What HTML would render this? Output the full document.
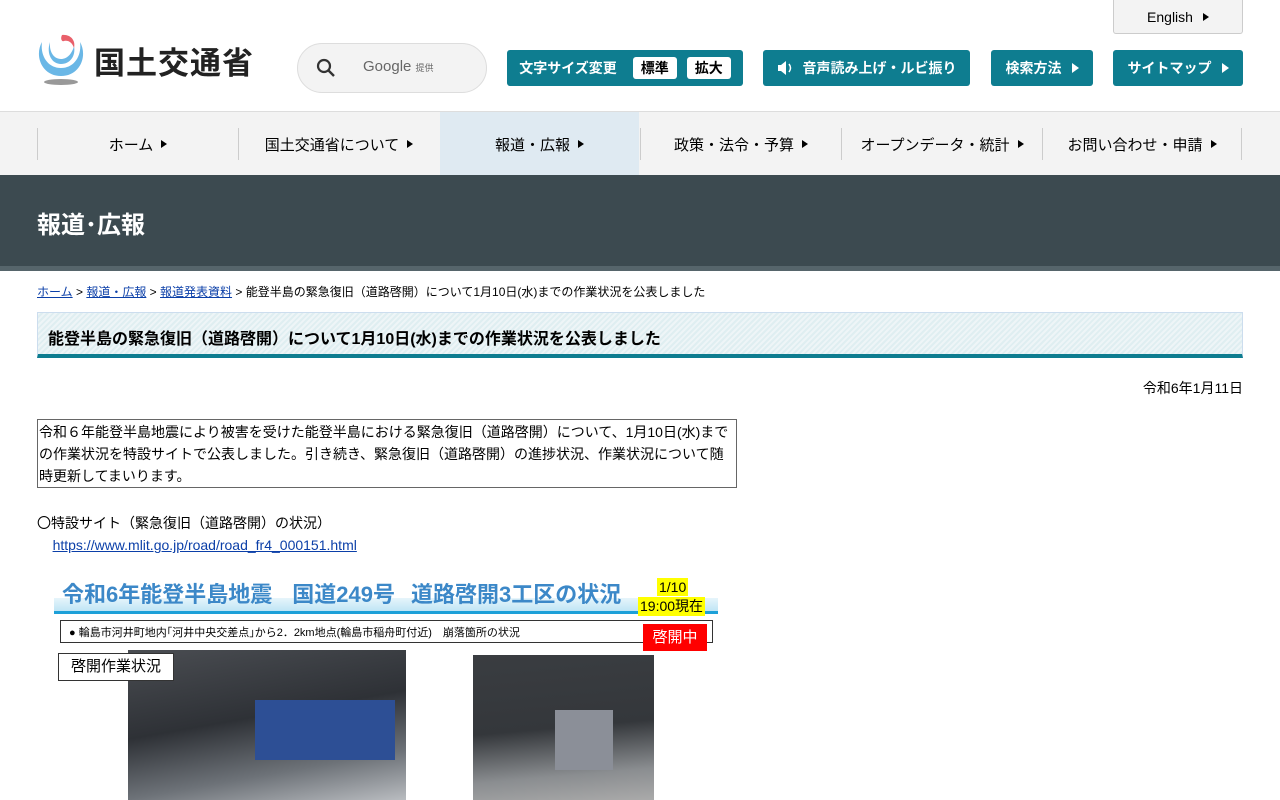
<!DOCTYPE html>
<html><head><meta charset="utf-8"><style>
*{margin:0;padding:0;box-sizing:border-box}
body{width:1280px;height:800px;overflow:hidden;background:#fff;font-family:"Liberation Sans","Noto Sans CJK JP",sans-serif;color:#000;position:relative}
.abs{position:absolute}
.btn{position:absolute;top:50px;height:36px;background:#0e7d90;color:#fff;border-radius:3px;font-size:14px;font-weight:bold;display:flex;align-items:center;justify-content:center}
.tri{display:inline-block;width:0;height:0;border-left:7px solid currentColor;border-top:5px solid transparent;border-bottom:5px solid transparent;margin-left:10px}
.nav{position:absolute;top:111px;left:0;width:1280px;height:64px;background:#f3f3f3;border-top:1px solid #ddd}
.ni{position:absolute;top:16px;height:32px;border-left:1px solid #ccc;font-size:15px;display:flex;align-items:center;justify-content:center}
.ni .tri{border-left-width:6px;border-top-width:4px;border-bottom-width:4px;margin-left:8px}
a{color:#0b3fa8}
</style></head><body>
<!-- logo -->
<svg class="abs" style="left:36px;top:32px" width="52" height="54" viewBox="0 0 52 54">
<path d="M6 10 C-2 24 6 44 25 44 C44 44 52 24 44 10 C46 24 38 36 25 36 C12 36 4 24 6 10 Z" fill="#6ab7e6"/>
<path d="M14 10 C10 22 16 32 25 32 C34 32 40 24 38 14 C36 22 31 27 25 27 C18 27 13 20 14 10 Z" fill="#6ab7e6"/>
<path d="M26 3 C34 2 40 8 38 16 C36 10 32 8 28 9 C26 10 24 7 26 3 Z" fill="#e9606a"/>
<ellipse cx="25" cy="50" rx="17" ry="3" fill="#999"/>
</svg>
<div class="abs" style="left:94px;top:38px;font-size:31px;font-weight:bold;color:#222;letter-spacing:1px">国土交通省</div>
<div class="abs" style="left:297px;top:43px;width:190px;height:50px;border:1px solid #ddd;border-radius:25px;background:#f3f3f3">
<svg class="abs" style="left:18px;top:14px" width="20" height="20" viewBox="0 0 20 20"><circle cx="8" cy="8" r="6" stroke="#333" stroke-width="2.2" fill="none"/><path d="M12.5 12.5 L18 18" stroke="#333" stroke-width="2.4"/></svg>
<span class="abs" style="left:65px;top:14px;font-size:15px;color:#666">Google <span style="font-size:9px">提供</span></span></div>
<div class="abs" style="left:1113px;top:0;width:130px;height:34px;background:#f3f3f3;border:1px solid #ccc;border-top:none;border-radius:0 0 3px 3px;font-size:14px;display:flex;align-items:center;justify-content:center">English<span class="tri" style="border-left-width:6px;border-top-width:4px;border-bottom-width:4px"></span></div>
<div class="btn" style="left:507px;width:236px">文字サイズ変更<span style="background:#fff;color:#000;padding:1px 8px;border-radius:3px;margin-left:16px">標準</span><span style="background:#fff;color:#000;padding:1px 8px;border-radius:3px;margin-left:10px">拡大</span></div>
<div class="btn" style="left:763px;width:207px"><svg width="18" height="16" viewBox="0 0 18 16" style="margin-right:8px"><path d="M1 5 H4 L9 1 V15 L4 11 H1 Z" fill="#fff"/><path d="M12 4 Q15 8 12 12" stroke="#fff" stroke-width="1.5" fill="none"/></svg>音声読み上げ・ルビ振り</div>
<div class="btn" style="left:991px;width:102px">検索方法<span class="tri"></span></div>
<div class="btn" style="left:1113px;width:130px">サイトマップ<span class="tri"></span></div>
<div class="nav">
<div class="ni" style="left:37px;width:201px">ホーム<span class="tri"></span></div>
<div class="ni" style="left:238px;width:201px">国土交通省について<span class="tri"></span></div>
<div class="abs" style="left:440px;top:0;width:199px;height:63px;background:#dfeaf2"></div>
<div class="ni" style="left:439px;width:201px;border-left:none">報道・広報<span class="tri"></span></div>
<div class="ni" style="left:640px;width:201px">政策・法令・予算<span class="tri"></span></div>
<div class="ni" style="left:841px;width:201px">オープンデータ・統計<span class="tri"></span></div>
<div class="ni" style="left:1042px;width:200px;border-right:1px solid #ccc">お問い合わせ・申請<span class="tri"></span></div>
</div>
<div class="abs" style="left:0;top:175px;width:1280px;height:96px;background:#3c4a50;border-bottom:5px solid #56656b"></div>
<div class="abs" style="left:37px;top:205px;font-size:24px;color:#fff;font-weight:bold">報道･広報</div>
<div class="abs" style="left:37px;top:283px;font-size:12px"><a href="#">ホーム</a> &gt; <a href="#">報道・広報</a> &gt; <a href="#">報道発表資料</a> &gt; 能登半島の緊急復旧（道路啓開）について1月10日(水)までの作業状況を公表しました</div>
<div class="abs" style="left:37px;top:312px;width:1206px;height:46px;border:1px solid #cde;border-bottom:4px solid #0e7d90;background:repeating-linear-gradient(135deg,#eef5f7 0 2px,#dfeef1 2px 4px);font-size:16px;font-weight:bold;padding:12px 10px">能登半島の緊急復旧（道路啓開）について1月10日(水)までの作業状況を公表しました</div>
<div class="abs" style="right:37px;top:378px;font-size:14px">令和6年1月11日</div>
<div class="abs" style="left:37px;top:419px;width:700px;height:69px;border:1px solid #666;font-size:14px;line-height:22px;padding:1px 1px">令和６年能登半島地震により被害を受けた能登半島における緊急復旧（道路啓開）について、1月10日(水)までの作業状況を特設サイトで公表しました。引き続き、緊急復旧（道路啓開）の進捗状況、作業状況について随時更新してまいります。</div>
<div class="abs" style="left:37px;top:512px;font-size:14px;line-height:22px">〇特設サイト（緊急復旧（道路啓開）の状況）<br>&nbsp;&nbsp;&nbsp;&nbsp;<a href="#">https://www.mlit.go.jp/road/road_fr4_000151.html</a></div>
<!-- figure -->
<div class="abs" style="left:54px;top:598px;width:664px;height:16px;background:linear-gradient(#e6f5fb,#bfe5f5);border-bottom:3px solid #1da0d8"></div>
<div class="abs" style="left:62px;top:577px;font-size:22px;font-weight:bold;color:#3c88c8;white-space:nowrap">令和6年能登半島地震<span style="display:inline-block;width:20px"></span>国道249号<span style="display:inline-block;width:16px"></span>道路啓開3工区の状況</div>
<div class="abs" style="left:657px;top:578px;background:#ff0;font-size:14px;padding:0 2px;line-height:18px">1/10</div>
<div class="abs" style="left:638px;top:597px;background:#ff0;font-size:14px;padding:0 2px;line-height:19px">19:00現在</div>
<div class="abs" style="left:60px;top:620px;width:653px;height:23px;border:1px solid #333;font-size:11px;padding:3px 8px">● 輪島市河井町地内｢河井中央交差点｣から2．2km地点(輪島市稲舟町付近)　崩落箇所の状況</div>
<div class="abs" style="left:643px;top:624px;width:64px;height:27px;background:#f00;color:#fff;font-size:15px;text-align:center;line-height:27px">啓開中</div>
<div class="abs" style="left:128px;top:650px;width:278px;height:150px;background:linear-gradient(170deg,#4a4d52 0%,#2e3136 45%,#6d7278 75%,#b9bcc0 100%)"></div>
<div class="abs" style="left:255px;top:700px;width:140px;height:60px;background:#2d4f95"></div>
<div class="abs" style="left:58px;top:653px;width:116px;height:28px;border:1px solid #333;background:#fff;font-size:15px;text-align:center;line-height:26px">啓開作業状況</div>
<div class="abs" style="left:473px;top:655px;width:181px;height:145px;background:linear-gradient(175deg,#3a3d41 0%,#34373b 50%,#8a8d90 80%,#aaa 100%)"></div>
<div class="abs" style="left:555px;top:710px;width:58px;height:60px;background:#8b8f98"></div>
</body></html>
